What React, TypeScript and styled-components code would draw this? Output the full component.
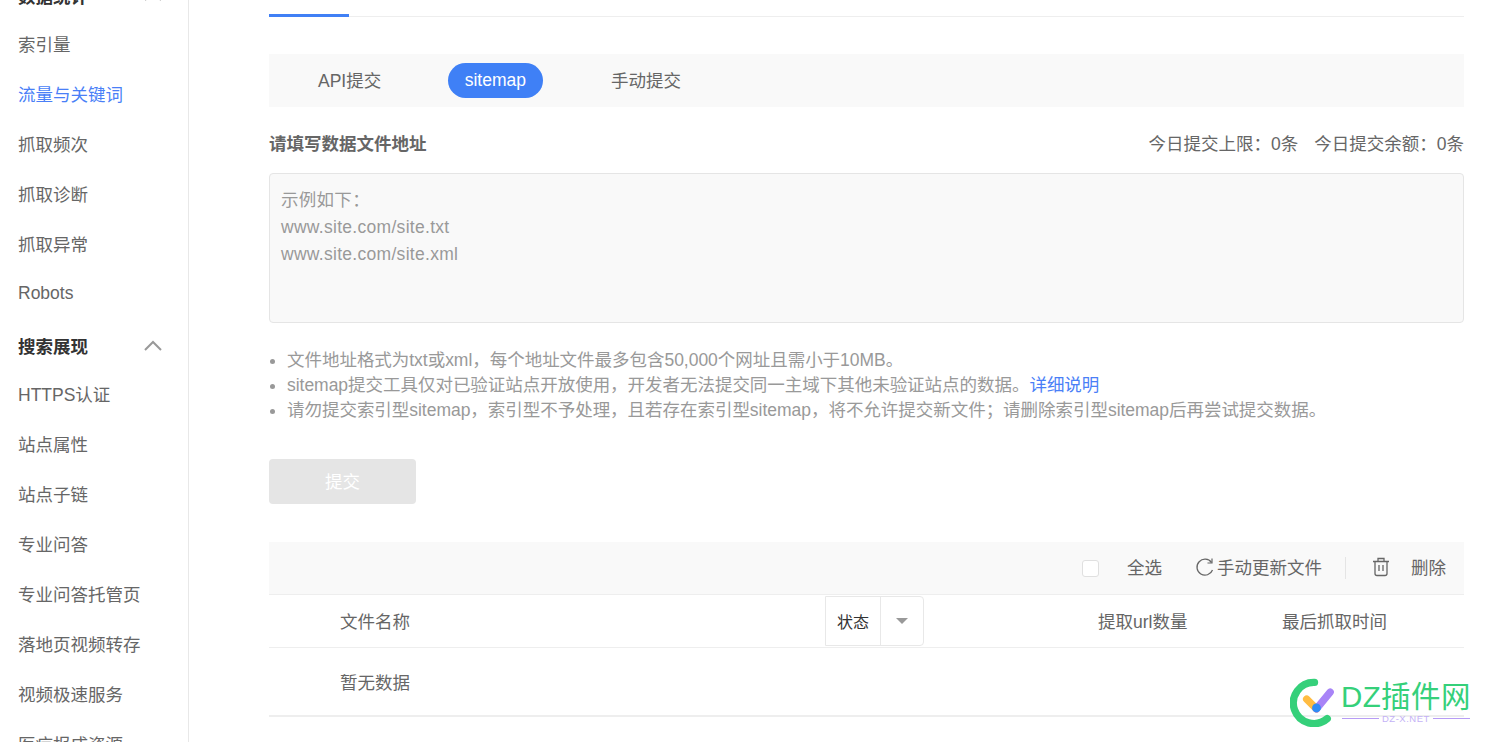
import React from 'react';
import styled, { createGlobalStyle } from 'styled-components';

const GlobalStyle = createGlobalStyle`
  html, body {
    margin: 0;
    padding: 0;
    height: 100%;
    overflow: hidden;
    background: #fff;
    font-family: "Liberation Sans", "Noto Sans CJK SC", sans-serif;
  }
  * { box-sizing: border-box; }
`;

const Page = styled.div`
  position: relative;
  display: flex;
  width: 1490px;
  height: 742px;
  overflow: hidden;
`;

// ---- sidebar ----

const Sidebar = styled.aside`
  flex: none;
  width: 189px;
  height: 800px;
  margin-top: -32px;
  padding-left: 18px;
  border-right: 1px solid #e8e8e8;
`;

const SectionTitle = styled.div`
  display: flex;
  align-items: center;
  justify-content: space-between;
  height: 46px;
  padding-right: 25px;
  margin-top: 4px;
  font-size: 17.5px;
  font-weight: 700;
  color: #333;
`;

const SideItem = styled.div<{ $active?: boolean }>`
  display: flex;
  align-items: center;
  height: 50px;
  font-size: 17.5px;
  color: ${p => (p.$active ? '#4a7ff7' : '#666')};
`;

const Chevron = () => (
  <svg width="20" height="12" viewBox="0 0 20 12" fill="none" stroke="#999" strokeWidth="2">
    <path d="M2 11 L10 3 L18 11" />
  </svg>
);

// ---- main ----

const Main = styled.main`
  flex: none;
  width: 1195px;
  margin-left: 80px;
`;

const TabLine = styled.div`
  height: 17px;
  border-bottom: 1px solid #eee;
`;

const TabMark = styled.div`
  width: 80px;
  height: 17px;
  border-bottom: 3px solid #4080f5;
`;

const SubTabs = styled.div`
  display: flex;
  align-items: center;
  height: 53px;
  margin-top: 37px;
  background: #f9f9f9;
`;

const SubTab = styled.div<{ $active?: boolean; $gap: number }>`
  display: flex;
  align-items: center;
  justify-content: center;
  height: 35px;
  margin-left: ${p => p.$gap}px;
  padding: 0 17px ${p => (p.$active ? 0 : 2)}px;
  border-radius: 18px;
  font-size: 17.5px;
  color: ${p => (p.$active ? '#fff' : '#666')};
  background: ${p => (p.$active ? '#3f80f6' : 'transparent')};
`;

const FormHead = styled.div`
  display: flex;
  align-items: center;
  justify-content: space-between;
  height: 34px;
  margin-top: 18px;
`;

const FormLabel = styled.div`
  font-size: 17.5px;
  font-weight: 700;
  color: #666;
`;

const Quota = styled.div`
  display: flex;
  gap: 16px;
  font-size: 17.5px;
  color: #666;
`;

const AddressBox = styled.div`
  height: 150px;
  margin-top: 14px;
  padding: 13px 11px;
  background: #f9f9f9;
  border: 1px solid #e5e5e5;
  border-radius: 4px;
  font-size: 17.5px;
  line-height: 27px;
  letter-spacing: 0.29px;
  color: #999;
`;

const Notes = styled.ul`
  margin: 25px 0 0;
  padding: 0 0 0 18px;
  font-size: 17.5px;
  line-height: 25px;
  letter-spacing: -0.03px;
  color: #999;
`;

const NoteLink = styled.span`
  color: #4a7ff7;
`;

const SubmitButton = styled.div`
  display: flex;
  align-items: center;
  justify-content: center;
  width: 147px;
  height: 45px;
  margin-top: 36px;
  padding-bottom: 2px;
  background: #e5e5e5;
  border-radius: 4px;
  font-size: 17.5px;
  color: #fff;
`;

const Toolbar = styled.div`
  display: flex;
  align-items: center;
  justify-content: flex-end;
  height: 53px;
  margin-top: 38px;
  padding: 0 18px 3px 0;
  background: #f9f9f9;
  border-bottom: 1px solid #eee;
  font-size: 17.5px;
  color: #666;
`;

const CheckBox = styled.div`
  width: 17px;
  height: 17px;
  margin: 3px 28px 0 0;
  background: #fff;
  border: 1px solid #e0e0e0;
  border-radius: 3px;
`;

const ToolLabel = styled.span<{ $right?: number; $left?: number }>`
  margin-right: ${p => p.$right ?? 0}px;
  margin-left: ${p => p.$left ?? 0}px;
`;

const ToolDivider = styled.div`
  width: 1px;
  height: 22px;
  margin: 3px 26px 0 23px;
  background: #e5e5e5;
`;

const IconWrap = styled.span`
  display: flex;
  margin-right: 2px;
`;

const HeadRow = styled.div`
  display: grid;
  grid-template-columns: 485px 273px 184px 1fr;
  align-items: center;
  height: 53px;
  padding-left: 71px;
  border-bottom: 1px solid #eee;
  font-size: 17.5px;
  color: #666;
`;

const HeadCell = styled.span`
  margin-bottom: 2px;
`;

const StatusFilter = styled.div`
  display: flex;
  width: 99px;
  height: 50px;
  border: 1px solid #e8e8e8;
  border-radius: 0 4px 4px 0;
  font-size: 16px;
  color: #333;
`;

const StatusText = styled.div`
  display: flex;
  align-items: center;
  justify-content: center;
  width: 55px;
  padding-bottom: 1px;
  border-right: 1px solid #e8e8e8;
`;

const StatusArrow = styled.div`
  flex: 1;
  display: flex;
  align-items: center;
  justify-content: center;
  &::after {
    content: '';
    border-top: 6px solid #999;
    border-left: 6px solid transparent;
    border-right: 6px solid transparent;
  }
`;

const EmptyRow = styled.div`
  display: flex;
  align-items: center;
  height: 69px;
  padding-left: 71px;
  border-bottom: 2px solid #eee;
  font-size: 17.5px;
  color: #666;
`;

// ---- watermark ----

const Watermark = styled.div`
  position: absolute;
  left: 1290px;
  top: 677px;
  display: flex;
  gap: 2px;
`;

const MarkText = styled.div`
  display: flex;
  flex-direction: column;
  align-items: center;
  padding-top: 3px;
`;

const MarkTitle = styled.div`
  font-size: 29.5px;
  line-height: 34px;
  letter-spacing: 0.4px;
  color: #35d07a;
  white-space: nowrap;
`;

const MarkSub = styled.div`
  display: flex;
  align-items: center;
  gap: 3px;
  font-size: 9.5px;
  line-height: 9px;
  letter-spacing: 0.5px;
  color: #c4b2f6;
  white-space: nowrap;
  &::before, &::after {
    content: '';
    width: 37px;
    height: 1px;
    background: #b79cf5;
  }
`;

const sideTop = ['索引量', '流量与关键词', '抓取频次', '抓取诊断', '抓取异常', 'Robots'];
const sideBottom = ['HTTPS认证', '站点属性', '站点子链', '专业问答', '专业问答托管页', '落地页视频转存', '视频极速服务', '医疗报成资源'];

export default function App() {
  return (
    <>
      <GlobalStyle />
      <Page>
        <Sidebar>
          <SectionTitle>
            数据统计
            <Chevron />
          </SectionTitle>
          {sideTop.map((s, i) => (
            <SideItem key={s} $active={i === 1}>{s}</SideItem>
          ))}
          <SectionTitle>
            搜索展现
            <Chevron />
          </SectionTitle>
          {sideBottom.map(s => (
            <SideItem key={s}>{s}</SideItem>
          ))}
        </Sidebar>

        <Main>
          <TabLine><TabMark /></TabLine>

          <SubTabs>
            <SubTab $gap={32}>API提交</SubTab>
            <SubTab $active $gap={49.5}>sitemap</SubTab>
            <SubTab $gap={51}>手动提交</SubTab>
          </SubTabs>

          <FormHead>
            <FormLabel>请填写数据文件地址</FormLabel>
            <Quota>
              <span>今日提交上限：0条</span>
              <span>今日提交余额：0条</span>
            </Quota>
          </FormHead>

          <AddressBox>
            示例如下：<br />
            www.site.com/site.txt<br />
            www.site.com/site.xml
          </AddressBox>

          <Notes>
            <li>文件地址格式为txt或xml，每个地址文件最多包含50,000个网址且需小于10MB。</li>
            <li>sitemap提交工具仅对已验证站点开放使用，开发者无法提交同一主域下其他未验证站点的数据。<NoteLink>详细说明</NoteLink></li>
            <li>请勿提交索引型sitemap，索引型不予处理，且若存在索引型sitemap，将不允许提交新文件；请删除索引型sitemap后再尝试提交数据。</li>
          </Notes>

          <SubmitButton>提交</SubmitButton>

          <Toolbar>
            <CheckBox />
            <ToolLabel $right={33}>全选</ToolLabel>
            <IconWrap>
              <svg width="20" height="20" viewBox="0 0 20 20" fill="none" stroke="#666" strokeWidth="1.3">
                <path d="M16.5 5.5A8 8 0 1 0 17.5 13" />
                <path d="M17 1.5V6H12.5" strokeWidth="1.2" />
              </svg>
            </IconWrap>
            <ToolLabel>手动更新文件</ToolLabel>
            <ToolDivider />
            <IconWrap>
              <svg width="18" height="20" viewBox="0 0 18 20" fill="none" stroke="#666" strokeWidth="1.3">
                <path d="M1 4.5H17M6 4.5V1.5H12V4.5M3 4.5V16.5Q3 18.5 5 18.5H13Q15 18.5 15 16.5V4.5M7 8V14M11 8V14" />
              </svg>
            </IconWrap>
            <ToolLabel $left={19}>删除</ToolLabel>
          </Toolbar>

          <HeadRow>
            <HeadCell>文件名称</HeadCell>
            <StatusFilter>
              <StatusText>状态</StatusText>
              <StatusArrow />
            </StatusFilter>
            <HeadCell>提取url数量</HeadCell>
            <HeadCell>最后抓取时间</HeadCell>
          </HeadRow>

          <EmptyRow>暂无数据</EmptyRow>
        </Main>

        <Watermark>
          <svg width="49" height="50" viewBox="0 0 50 50" fill="none">
            <path d="M25 5 A21 21 0 1 0 38 42" stroke="#35d07a" strokeWidth="7.5" strokeLinecap="round" />
            <path d="M17 22 L27 32" stroke="#ffbc42" strokeWidth="7.5" strokeLinecap="round" />
            <path d="M27 32 L41 15" stroke="#a884f7" strokeWidth="7.5" strokeLinecap="round" />
            <circle cx="27" cy="31" r="4.5" fill="#2f8cf5" />
          </svg>
          <MarkText>
            <MarkTitle>DZ插件网</MarkTitle>
            <MarkSub>DZ-X.NET</MarkSub>
          </MarkText>
        </Watermark>
      </Page>
    </>
  );
}
